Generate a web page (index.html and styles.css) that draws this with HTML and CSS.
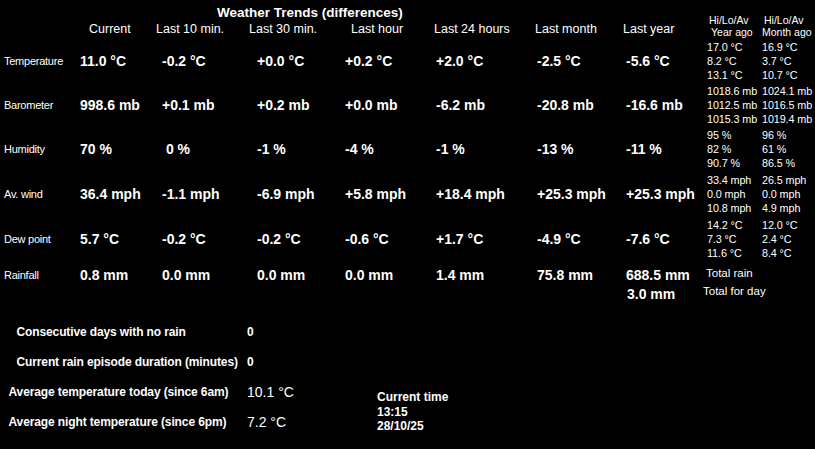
FILE: index.html
```html
<!DOCTYPE html>
<html lang="en">

<head>
  <meta charset="UTF-8" />
  <meta name="viewport" content="width=device-width, initial-scale=1.0" />
  <title>Weather Trends</title>
  <link rel="stylesheet" href="styles.css">
</head>

<body>
  <div class="screen">

    <!-- Cabecalho -->
    <header class="head">
      <div class="head-main">
        <h1 class="title">Weather Trends (differences)</h1>
        <div class="col-heads">
          <span>Current</span>
          <span>Last 10 min.</span>
          <span>Last 30 min.</span>
          <span>Last hour</span>
          <span>Last 24 hours</span>
          <span>Last month</span>
          <span>Last year</span>
        </div>
      </div>
      <div class="hilo-head">
        <div class="hh-col first">
          <span>Hi/Lo/Av</span>
          <span class="sub">Year ago</span>
        </div>
        <div class="hh-col">
          <span class="sub">Hi/Lo/Av</span>
          <span>Month ago</span>
        </div>
      </div>
    </header>

    <!-- Tabela de tendencias -->
    <div class="trends">
      <div class="label">Temperature</div>
      <div class="val">11.0 °C</div>
      <div class="val">-0.2 °C</div>
      <div class="val">+0.0 °C</div>
      <div class="val">+0.2 °C</div>
      <div class="val">+2.0 °C</div>
      <div class="val">-2.5 °C</div>
      <div class="val">-5.6 °C</div>
      <div class="hilo">17.0 °C<br>8.2 °C<br>13.1 °C</div>
      <div class="hilo">16.9 °C<br>3.7 °C<br>10.7 °C</div>

      <div class="label">Barometer</div>
      <div class="val">998.6 mb</div>
      <div class="val">+0.1 mb</div>
      <div class="val">+0.2 mb</div>
      <div class="val">+0.0 mb</div>
      <div class="val">-6.2 mb</div>
      <div class="val">-20.8 mb</div>
      <div class="val">-16.6 mb</div>
      <div class="hilo">1018.6 mb<br>1012.5 mb<br>1015.3 mb</div>
      <div class="hilo">1024.1 mb<br>1016.5 mb<br>1019.4 mb</div>

      <div class="label">Humidity</div>
      <div class="val">70 %</div>
      <div class="val"> 0 %</div>
      <div class="val">-1 %</div>
      <div class="val">-4 %</div>
      <div class="val">-1 %</div>
      <div class="val">-13 %</div>
      <div class="val">-11 %</div>
      <div class="hilo">95 %<br>82 %<br>90.7 %</div>
      <div class="hilo">96 %<br>61 %<br>86.5 %</div>

      <div class="label">Av. wind</div>
      <div class="val">36.4 mph</div>
      <div class="val">-1.1 mph</div>
      <div class="val">-6.9 mph</div>
      <div class="val">+5.8 mph</div>
      <div class="val">+18.4 mph</div>
      <div class="val">+25.3 mph</div>
      <div class="val">+25.3 mph</div>
      <div class="hilo">33.4 mph<br>0.0 mph<br>10.8 mph</div>
      <div class="hilo">26.5 mph<br>0.0 mph<br>4.9 mph</div>

      <div class="label">Dew point</div>
      <div class="val">5.7 °C</div>
      <div class="val">-0.2 °C</div>
      <div class="val">-0.2 °C</div>
      <div class="val">-0.6 °C</div>
      <div class="val">+1.7 °C</div>
      <div class="val">-4.9 °C</div>
      <div class="val">-7.6 °C</div>
      <div class="hilo">14.2 °C<br>7.3 °C<br>11.6 °C</div>
      <div class="hilo">12.0 °C<br>2.4 °C<br>8.4 °C</div>

      <div class="label">Rainfall</div>
      <div class="val">0.8 mm</div>
      <div class="val">0.0 mm</div>
      <div class="val">0.0 mm</div>
      <div class="val">0.0 mm</div>
      <div class="val">1.4 mm</div>
      <div class="val">75.8 mm</div>
      <div class="val">688.5 mm</div>
      <div class="note rain-total">Total rain</div>

      <div class="val day-val">3.0 mm</div>
      <div class="note day-total">Total for day</div>
    </div>

    <!-- Resumo inferior -->
    <div class="bottom">
      <div class="stats">
        <div class="stat-label">Consecutive days with no rain</div>
        <div class="stat-num">0</div>
        <div class="stat-label">Current rain episode duration (minutes)</div>
        <div class="stat-num">0</div>
        <div class="stat-label wide">Average temperature today (since 6am)</div>
        <div class="stat-temp">10.1 °C</div>
        <div class="stat-label wide">Average night temperature (since 6pm)</div>
        <div class="stat-temp">7.2 °C</div>
      </div>
      <div class="clock">
        Current time<br>
        13:15<br>
        28/10/25
      </div>
    </div>

  </div>
</body>

</html>
```

FILE: styles.css
```css
* {
  box-sizing: border-box;
}

body {
  margin: 0;
  background: #000;
  color: #fff;
  font-family: "Liberation Sans", Arial, sans-serif;
}

.screen {
  width: 815px;
  height: 449px;
  overflow: hidden;
}

/* Cabecalho */
.head {
  display: flex;
  align-items: flex-end;
  height: 38px;
}

.head-main {
  width: 707px;
  padding-top: 4px;
}

.title {
  margin: 0;
  padding-left: 217px;
  font-size: 13.5px;
  line-height: 17px;
  font-weight: bold;
}

.col-heads {
  display: grid;
  grid-template-columns: 67px 93px 102px 83px 101px 88px 84px;
  padding-left: 89px;
  font-size: 12.5px;
  line-height: 17px;
  white-space: nowrap;
}

.hilo-head {
  display: flex;
  font-size: 10.5px;
  line-height: 11.5px;
  white-space: nowrap;
}

.hh-col {
  display: flex;
  flex-direction: column;
  width: 53px;
}

.hh-col.first {
  width: 55px;
  padding-left: 2px;
}

.hh-col .sub {
  padding-left: 2px;
}

/* Tabela */
.trends {
  display: grid;
  grid-template-columns: 80px 82px 95px 88px 91px 101px 89px 81px 55px 53px;
  grid-template-rows: 43px 45px 43px 47px 43px 29px 12px;
  align-items: center;
  margin-top: 1px;
}

.label {
  padding-left: 4px;
  font-size: 11px;
  letter-spacing: -0.25px;
  white-space: nowrap;
}

.val {
  font-size: 14px;
  font-weight: bold;
  white-space: pre;
}

.hilo {
  font-size: 10.8px;
  line-height: 14px;
  letter-spacing: -0.1px;
  white-space: nowrap;
  overflow: hidden;
}

.note {
  font-size: 11.5px;
  white-space: nowrap;
}

.rain-total {
  grid-column: 9 / span 2;
  margin-left: -1px;
  margin-top: -3px;
}

.day-val {
  grid-column: 8;
  padding-left: 1px;
  margin-bottom: 2px;
}

.day-total {
  grid-column: 9 / span 2;
  margin-left: -4px;
  margin-bottom: 8px;
}

/* Resumo */
.bottom {
  display: flex;
  margin-top: 16px;
}

.stats {
  display: grid;
  grid-template-columns: 247px 130px;
  grid-auto-rows: 30px;
  align-items: center;
}

.stat-label {
  padding-left: 16.5px;
  font-size: 12px;
  font-weight: bold;
  letter-spacing: -0.12px;
  white-space: nowrap;
}

.stat-label.wide {
  padding-left: 8.5px;
}

.stat-num {
  font-size: 12px;
  font-weight: bold;
}

.stat-temp {
  font-size: 14px;
}

.clock {
  margin-top: 73px;
  font-size: 12px;
  line-height: 14.5px;
  font-weight: bold;
}
```
